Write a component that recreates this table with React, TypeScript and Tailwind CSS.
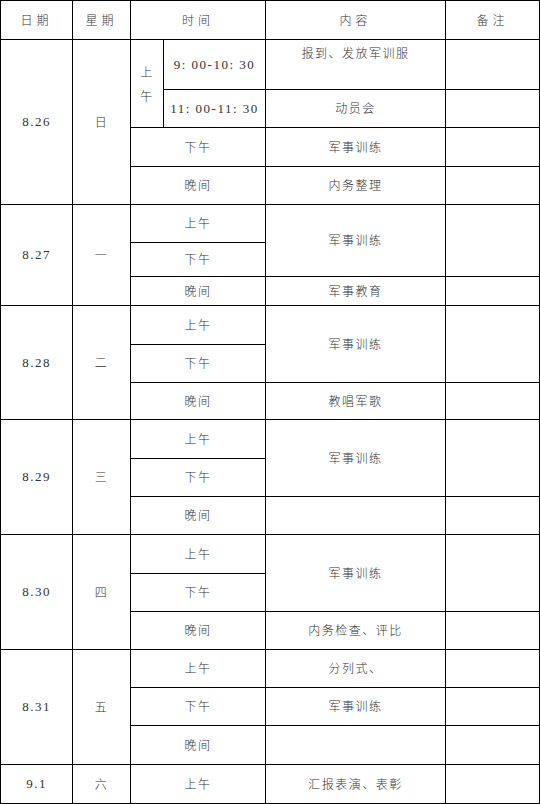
import React from 'react'

const cell = 'border border-black text-center align-middle p-0 text-[12px] leading-[14px]'

interface DayBlock {
  date: string
  week: string
  content: string
  evening: string
}

// days that follow the same three-row layout
const standard_days: DayBlock[] = [
  { date: '8.27', week: '一', content: '军事训练', evening: '军事教育' },
  { date: '8.28', week: '二', content: '军事训练', evening: '教唱军歌' },
  { date: '8.29', week: '三', content: '军事训练', evening: '' },
  { date: '8.30', week: '四', content: '军事训练', evening: '内务检查、评比' }
]

const heights: Record<string, string[]> = {
  '8.27': ['h-[38px]', 'h-[34px]', 'h-[29px]'],
  '8.28': ['h-[39px]', 'h-[38px]', 'h-[37px]'],
  '8.29': ['h-[39px]', 'h-[38px]', 'h-[38px]'],
  '8.30': ['h-[39px]', 'h-[38px]', 'h-[38px]']
}

const Txt: React.FC<{ children: React.ReactNode; className?: string }> = ({ children, className = '' }) => (
  <span className={`font-['Noto_Sans_CJK_SC','Noto_Sans',sans-serif] text-[12px] leading-[14px] tracking-[1.5px] text-[#333] font-light ${className}`}>
    {children}
  </span>
)

const Num: React.FC<{ children: React.ReactNode }> = ({ children }) => (
  <span className="font-['Liberation_Serif',serif] text-[13px] leading-[14px] tracking-[1.5px] text-[#333]">{children}</span>
)

export default function App() {
  return (
    <div className="w-[540px] h-[804px] bg-white">
      <table className="table-fixed border-collapse w-[539px]">
        <colgroup>
          <col className="w-[72px]" />
          <col className="w-[58px]" />
          <col className="w-[33px]" />
          <col className="w-[102px]" />
          <col className="w-[180px]" />
          <col className="w-[94px]" />
        </colgroup>
        <tbody>
          {/* header */}
          <tr className="h-[39px]">
            <td className={cell}><Txt className="tracking-[4px]">日期</Txt></td>
            <td className={cell}><Txt className="tracking-[4px]">星期</Txt></td>
            <td className={cell} colSpan={2}><Txt className="tracking-[4px]">时间</Txt></td>
            <td className={cell}><Txt className="tracking-[4px]">内容</Txt></td>
            <td className={cell}><Txt className="tracking-[4px]">备注</Txt></td>
          </tr>

          {/* 8.26 */}
          <tr className="h-[50px]">
            <td className={cell} rowSpan={4}><Num>8.26</Num></td>
            <td className={cell} rowSpan={4}><Txt>日</Txt></td>
            <td className={cell} rowSpan={2}>
              <Txt className="block !leading-[24px]">上<br />午</Txt>
            </td>
            <td className={cell}><Num>9: 00-10: 30</Num></td>
            <td className={`${cell} !align-top pt-[6px]`}><Txt>报到、发放军训服</Txt></td>
            <td className={cell}></td>
          </tr>
          <tr className="h-[38px]">
            <td className={cell}><Num>11: 00-11: 30</Num></td>
            <td className={cell}><Txt>动员会</Txt></td>
            <td className={cell}></td>
          </tr>
          <tr className="h-[39px]">
            <td className={cell} colSpan={2}><Txt>下午</Txt></td>
            <td className={cell}><Txt>军事训练</Txt></td>
            <td className={cell}></td>
          </tr>
          <tr className="h-[38px]">
            <td className={cell} colSpan={2}><Txt>晚间</Txt></td>
            <td className={cell}><Txt>内务整理</Txt></td>
            <td className={cell}></td>
          </tr>

          {standard_days.map((day) => {
            const h = heights[day.date]
            return (
              <React.Fragment key={day.date}>
                <tr className={h[0]}>
                  <td className={cell} rowSpan={3}><Num>{day.date}</Num></td>
                  <td className={cell} rowSpan={3}><Txt>{day.week}</Txt></td>
                  <td className={cell} colSpan={2}><Txt>上午</Txt></td>
                  <td className={cell} rowSpan={2}><Txt>{day.content}</Txt></td>
                  <td className={cell} rowSpan={2}></td>
                </tr>
                <tr className={h[1]}>
                  <td className={cell} colSpan={2}><Txt>下午</Txt></td>
                </tr>
                <tr className={h[2]}>
                  <td className={cell} colSpan={2}><Txt>晚间</Txt></td>
                  <td className={cell}><Txt>{day.evening}</Txt></td>
                  <td className={cell}></td>
                </tr>
              </React.Fragment>
            )
          })}

          {/* 8.31 */}
          <tr className="h-[38px]">
            <td className={cell} rowSpan={3}><Num>8.31</Num></td>
            <td className={cell} rowSpan={3}><Txt>五</Txt></td>
            <td className={cell} colSpan={2}><Txt>上午</Txt></td>
            <td className={cell}><Txt>分列式、</Txt></td>
            <td className={cell}></td>
          </tr>
          <tr className="h-[38px]">
            <td className={cell} colSpan={2}><Txt>下午</Txt></td>
            <td className={cell}><Txt>军事训练</Txt></td>
            <td className={cell}></td>
          </tr>
          <tr className="h-[39px]">
            <td className={cell} colSpan={2}><Txt>晚间</Txt></td>
            <td className={cell}></td>
            <td className={cell}></td>
          </tr>

          {/* 9.1 */}
          <tr className="h-[39px]">
            <td className={cell}><Num>9.1</Num></td>
            <td className={cell}><Txt>六</Txt></td>
            <td className={cell} colSpan={2}><Txt>上午</Txt></td>
            <td className={cell}><Txt>汇报表演、表彰</Txt></td>
            <td className={cell}></td>
          </tr>
        </tbody>
      </table>
    </div>
  )
}
